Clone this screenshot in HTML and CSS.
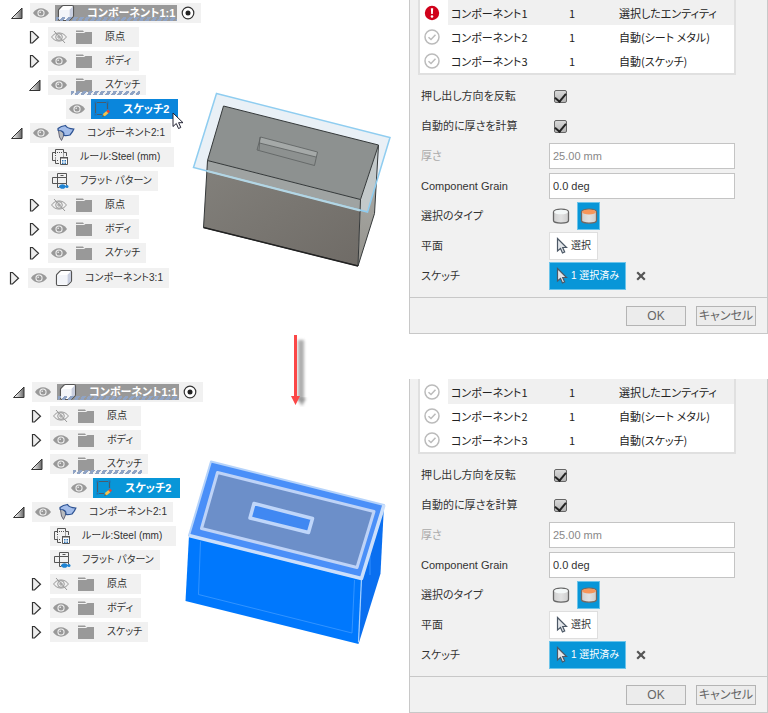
FILE: index.html
```html
<!DOCTYPE html>
<html lang="ja">
<head>
<meta charset="utf-8">
<meta name="viewport" content="width=device-width, initial-scale=1">
<title>コンポーネント</title>
<link rel="stylesheet" href="styles.css">
</head>
<body>
<svg class="defs" aria-hidden="true">
  <defs>
    <linearGradient id="caret-fill" x1="0" x2="1"><stop offset="0.2" stop-color="#eee"/><stop offset="1" stop-color="#666"/></linearGradient>
    <linearGradient id="can-fill" x1="0" x2="1"><stop offset="0" stop-color="#d0d0d0"/><stop offset="0.5" stop-color="#e2e2e2"/><stop offset="1" stop-color="#cecece"/></linearGradient>
    <linearGradient id="front-fill" x1="0" x2="1" y2="1"><stop offset="0" stop-color="#83817c"/><stop offset="1" stop-color="#6f6b66"/></linearGradient>
    <linearGradient id="side-fill" y1="0" y2="1" x2="0"><stop offset="0" stop-color="#b2b4b1"/><stop offset="1" stop-color="#94928c"/></linearGradient>
    <filter id="soft" x="-100%" width="400%"><feGaussianBlur stdDeviation="1.500"/></filter>
  </defs>
  <symbol id="open" viewBox="0 0 14 14"><path d="M2.500 12.500 13 2v10.500z" fill="url(#caret-fill)" stroke="#333"/></symbol>
  <symbol id="closed" viewBox="0 0 14 14"><path d="M3.500 1.500H5.500L11.500 7.200 5.500 13H3.500z" fill="#ededed" stroke="#333" stroke-width="1.200"/></symbol>
  <symbol id="eye" viewBox="0 0 16 16"><path d="M0 8C4 1.800 12 1.800 16 8 12 14.200 4 14.200 0 8z" fill="#999"/><circle cx="8" cy="8" r="3.600" fill="#f1f1f1"/><circle cx="8" cy="8" r="2.500" fill="#999"/><circle cx="7.200" cy="7.200" r=".8" fill="#f1f1f1"/></symbol>
  <symbol id="eye-off" viewBox="0 0 16 16"><g fill="none" stroke="#999"><path d="M.6 8C4 2.600 12 2.600 15.400 8 12 13.400 4 13.400.6 8z"/><circle cx="8" cy="8" r="3.300"/><circle cx="8" cy="8" r="1.200"/><path d="M3 2l11 12"/></g></symbol>
  <symbol id="folder" viewBox="0 0 16 16"><path d="M0 1.500h7l1 1.500H0zM0 4h8l1.500-1H16v12H0z" fill="#999"/></symbol>
  <symbol id="cube" viewBox="0 0 18 18"><path d="M1.500 6.500q0-.8.600-1.400L5 2.100q.6-.6 1.400-.6H15q1.500 0 1.500 1.500v8.500q0 .8-.6 1.400l-3 3q-.6.6-1.400.6H3q-1.500 0-1.500-1.500z" fill="#fff" stroke="#555" stroke-width="1.200"/><path d="M12.500 5.800 16 2.300v9.200q0 .6-.5 1l-3 3z" fill="#c9cfe0"/><path d="M2.500 6h9.500v9.500H3q-.8 0-.8-.8z" fill="#f3f5f9"/></symbol>
  <symbol id="sheet" viewBox="0 0 18 18"><path d="M1.200 5 5 7.500q2 1.300 1.500 4.500L4.500 16.500 2.500 13z" fill="#b9bbbe" stroke="#667"/><path d="M1 4.500Q4 2 8.500 1.500q1.500 3 8.300 3.500-.8 2.500-3.800 6-3 .7-6 .5.500-5-5.800-5z" fill="#a3bdea" stroke="#2d5292" stroke-width="1.200"/></symbol>
  <symbol id="rule" viewBox="0 0 18 18"><g fill="none" stroke="#555"><path d="M4.500 4.500H1.500v8h3M4.500 15.500v-4M4.500 6V1.500h8V4.500h3V8M4.500 15.500H8"/><path d="M4.500 7v1M4.500 9.500v1M12.500 5.500v1M12.500 7.500v1M6 4.500h1M8 4.500h1M10 4.500h1M6 12.500h1"/><path d="M9.500 9.500h7v7h-7z" fill="#fff"/></g><path d="M9 9h8v1.500H9z" fill="#555"/><path d="M11 12h1.500v1.500H11zM13.500 12H15v1.500h-1.500zM11 14.500h1.500V16H11zM13.500 14.500H15V16h-1.500z" fill="#2c75b8"/></symbol>
  <symbol id="flat" viewBox="0 0 18 18"><path d="M6.500 1.500h9v4h-9zM1.500 5.500h14v6h-14zM6.500 5.500v10h2M15.500 11.500v2M9.500 3.500h3" fill="none" stroke="#555"/><path d="M8 14.500h9" stroke="#1f83d2" stroke-width="1.500"/><ellipse cx="11.500" cy="14.500" rx="2.800" ry="2.300" fill="#1f83d2"/><circle cx="16" cy="14.500" r="1.500" fill="#1f83d2"/></symbol>
  <symbol id="sketch" viewBox="0 0 18 18"><path d="M2.500 3v10M4 2.500h9M14.500 3v6M4 14.500h5" fill="none" stroke="#4b5b6b" stroke-width="1.200"/><path d="M1.500 1.500h2v2h-2zM13.500 1.500h2v2h-2zM1.500 13.500h2v2h-2z" fill="#1f70b0"/><path d="M9.500 16.500l1-3 3-2.500 2 2-3 2.800z" fill="#f6c34c"/><path d="M13.300 11.200l1.700-1.700 2 2-1.700 1.700z" fill="#e84434"/><path d="M9.300 16.800l.6-1.800 1.300 1.200z" fill="#443"/></symbol>
  <symbol id="target" viewBox="0 0 14 14"><circle cx="7" cy="7" r="5.800" fill="#fff" stroke="#333" stroke-width="1.200"/><circle cx="7" cy="7" r="2.500" fill="#222"/></symbol>
  <symbol id="pointer" viewBox="0 0 12 18"><path d="M1 1v13.500l3.300-3 2.200 5 2.300-1-2.200-4.800H11z" fill="#fff" stroke="#223" stroke-width="1"/></symbol>
  <symbol id="pick" viewBox="0 0 12 18"><path d="M1.500 1.500V14l3-2.500 2 4.500 2.200-1-2-4.500H10.500z" fill="#e3e6ea" stroke="#4c5866" stroke-width="1.200"/></symbol>
  <symbol id="error" viewBox="0 0 16 16"><circle cx="8" cy="8" r="7.200" fill="#d0021b"/><path d="M6.800 3.200h2.400L8.800 9H7.200z" fill="#fff"/><circle cx="8" cy="11.500" r="1.300" fill="#fff"/></symbol>
  <symbol id="done" viewBox="0 0 16 16"><circle cx="8" cy="8" r="7" fill="#fff" stroke="#bbb" stroke-width="1.500"/><path d="M4.500 8.200 7 10.500l4.500-4.800" fill="none" stroke="#bbb" stroke-width="1.500"/></symbol>
  <symbol id="can" viewBox="0 0 18 18"><path d="M1.500 5C1.500 1.200 16.500 1.200 16.500 5v8.500c0 3.500-15 3.500-15 0z" fill="url(#can-fill)" stroke="#666" stroke-width="1.300"/><ellipse cx="9" cy="5" rx="6.800" ry="2.300" fill="#f4f8f8"/></symbol>
  <symbol id="can-top" viewBox="0 0 18 18"><path d="M1.500 5C1.500 1.200 16.500 1.200 16.500 5v8.500c0 3.500-15 3.500-15 0z" fill="url(#can-fill)" stroke="#75675f" stroke-width="1.300"/><ellipse cx="9" cy="5" rx="6.900" ry="2.500" fill="#f7965a"/></symbol>
  <symbol id="cross" viewBox="0 0 10 10"><path d="M1.200 1.200l7.600 7.600M8.800 1.200 1.200 8.800" stroke="#555" stroke-width="2.200"/></symbol>
</svg>

<main class="steps">
  <section class="step">
    <ul class="tree">
      <li class="node"><svg class="caret"><use href="#open"/></svg><div class="pill root"><svg class="icon"><use href="#eye"/></svg><span class="chip hatched"><svg class="icon big"><use href="#cube"/></svg><span class="name">コンポーネント1:1</span></span><svg class="target"><use href="#target"/></svg></div></li>
      <li class="node child"><svg class="caret"><use href="#closed"/></svg><div class="pill short"><svg class="icon"><use href="#eye-off"/></svg><svg class="icon kind"><use href="#folder"/></svg><span class="name">原点</span></div></li>
      <li class="node child"><svg class="caret"><use href="#closed"/></svg><div class="pill short"><svg class="icon"><use href="#eye"/></svg><svg class="icon kind"><use href="#folder"/></svg><span class="name">ボディ</span></div></li>
      <li class="node child"><svg class="caret"><use href="#open"/></svg><div class="pill"><svg class="icon"><use href="#eye"/></svg><span class="group hatched"><svg class="icon kind"><use href="#folder"/></svg><span class="name">スケッチ</span></span></div></li>
      <li class="node leaf"><div class="pill active"><svg class="icon"><use href="#eye"/></svg><span class="chip"><svg class="icon big"><use href="#sketch"/></svg><span class="name">スケッチ2</span></span><svg class="cursor"><use href="#pointer"/></svg></div></li>
      <li class="node"><svg class="caret"><use href="#open"/></svg><div class="pill"><svg class="icon"><use href="#eye"/></svg><svg class="icon kind big"><use href="#sheet"/></svg><span class="name">コンポーネント2:1</span></div></li>
      <li class="node child bare"><div class="pill wide"><svg class="icon big"><use href="#rule"/></svg><span class="name">ルール:Steel (mm)</span></div></li>
      <li class="node child bare"><div class="pill"><svg class="icon big"><use href="#flat"/></svg><span class="name">フラット パターン</span></div></li>
      <li class="node child"><svg class="caret"><use href="#closed"/></svg><div class="pill short"><svg class="icon"><use href="#eye-off"/></svg><svg class="icon kind"><use href="#folder"/></svg><span class="name">原点</span></div></li>
      <li class="node child"><svg class="caret"><use href="#closed"/></svg><div class="pill short"><svg class="icon"><use href="#eye"/></svg><svg class="icon kind"><use href="#folder"/></svg><span class="name">ボディ</span></div></li>
      <li class="node child"><svg class="caret"><use href="#closed"/></svg><div class="pill"><svg class="icon"><use href="#eye"/></svg><svg class="icon kind"><use href="#folder"/></svg><span class="name">スケッチ</span></div></li>
      <li class="node last"><svg class="caret"><use href="#closed"/></svg><div class="pill"><svg class="icon"><use href="#eye"/></svg><svg class="icon kind big"><use href="#cube"/></svg><span class="name">コンポーネント3:1</span></div></li>
    </ul>
    <svg class="model" viewBox="180 76 220 200" role="img" aria-label="モデル">
      <path d="M216.500 93.500 390 137.500 367.500 212 193.500 167.500z" fill="#e9f0f6"/>
      <path d="M207.500 160.500 360.500 199.500 358 266 203.500 227.500z" fill="url(#front-fill)"/>
      <path d="M360.500 199.500 378.500 145 374.500 213.500 358 266z" fill="url(#side-fill)"/>
      <path d="M223.500 106 378.500 145 360.500 199.500 207.500 160.500z" fill="#8d9190"/>
      <path d="M207.500 160.500 360.500 199.500 360 210.500 207 171z" fill="#9fa3a2"/>
      <path d="M360.500 199.500 378.500 145 376.500 182 367.500 212 360 210.500z" fill="#c3c9ca"/>
      <path d="M260.500 137 317.500 152 316 157 259.500 143z" fill="#a5a9a8"/>
      <path d="M260.500 137 317.500 152 314.500 165.500 257 150zM259.500 143 316 157M260 137l-1 13" fill="none" stroke="#5c6060" stroke-width=".8"/>
      <path d="M223.500 106 378.500 145 360.500 199.500 207.500 160.500zM207.500 160.500 203.500 227.500 358 266 374.500 213.500 378.500 145M360.500 199.500 358 266" fill="none" stroke="#35393a" stroke-linejoin="round"/>
      <path d="M203.500 227.500 358 266" stroke="#222" stroke-width="1.500"/>
      <path d="M216.500 93.500 390 137.500 367.500 212 193.500 167.500z" fill="none" stroke="#8fcdf0" stroke-width="1.500"/>
      <path d="M207 171 360 210.500" stroke="#b4d6e4" stroke-width="2"/>
    </svg>
    <form class="dialog">
      <table class="parts">
        <tr class="current"><td class="state"><svg class="icon"><use href="#error"/></svg></td><td class="part">コンポーネント1</td><td class="count">1</td><td class="source">選択したエンティティ</td></tr>
        <tr><td class="state"><svg class="icon"><use href="#done"/></svg></td><td class="part">コンポーネント2</td><td class="count">1</td><td class="source">自動(シート メタル)</td></tr>
        <tr><td class="state"><svg class="icon"><use href="#done"/></svg></td><td class="part">コンポーネント3</td><td class="count">1</td><td class="source">自動(スケッチ)</td></tr>
      </table>
      <div class="fields">
        <div class="field"><label for="flip-a">押し出し方向を反転</label><input class="tick" type="checkbox" id="flip-a" checked></div>
        <div class="field"><label for="auto-a">自動的に厚さを計算</label><input class="tick" type="checkbox" id="auto-a" checked></div>
        <div class="field off"><label for="thick-a">厚さ</label><input class="text" type="text" id="thick-a" value="25.00 mm" disabled></div>
        <div class="field"><label for="grain-a">Component Grain</label><input class="text" type="text" id="grain-a" value="0.0 deg"></div>
        <div class="field"><span>選択のタイプ</span><div class="kinds"><button type="button" class="kind-button" aria-label="ボディ"><svg class="icon big"><use href="#can"/></svg></button><button type="button" class="kind-button on" aria-label="面"><svg class="icon big"><use href="#can-top"/></svg></button></div></div>
        <div class="field"><label for="plane-a">平面</label><button type="button" class="pick" id="plane-a"><svg class="pick-icon"><use href="#pick"/></svg>選択</button></div>
        <div class="field"><label for="sketch-a">スケッチ</label><div class="picked"><button type="button" class="pick on" id="sketch-a"><svg class="pick-icon"><use href="#pick"/></svg>1 選択済み</button><button type="button" class="clear" aria-label="クリア"><svg class="cross"><use href="#cross"/></svg></button></div></div>
      </div>
      <div class="actions"><button type="button" class="action">OK</button><button type="button" class="action">キャンセル</button></div>
    </form>
  </section>

  <div class="between">
    <svg class="arrow" viewBox="0 0 30 80" aria-hidden="true"><path d="M14 6h6v60h-6z" fill="#999" opacity=".8" filter="url(#soft)"/><path d="M13 64h9l-4 8z" fill="#777" opacity=".7" filter="url(#soft)"/><path d="M10 1h3v61h3L11.500 71 7 62h3z" fill="#fb4747"/></svg>
  </div>

  <section class="step after">
    <ul class="tree">
      <li class="node"><svg class="caret"><use href="#open"/></svg><div class="pill root"><svg class="icon"><use href="#eye"/></svg><span class="chip hatched"><svg class="icon big"><use href="#cube"/></svg><span class="name">コンポーネント1:1</span></span><svg class="target"><use href="#target"/></svg></div></li>
      <li class="node child"><svg class="caret"><use href="#closed"/></svg><div class="pill short"><svg class="icon"><use href="#eye-off"/></svg><svg class="icon kind"><use href="#folder"/></svg><span class="name">原点</span></div></li>
      <li class="node child"><svg class="caret"><use href="#closed"/></svg><div class="pill short"><svg class="icon"><use href="#eye"/></svg><svg class="icon kind"><use href="#folder"/></svg><span class="name">ボディ</span></div></li>
      <li class="node child"><svg class="caret"><use href="#open"/></svg><div class="pill"><svg class="icon"><use href="#eye"/></svg><span class="group hatched"><svg class="icon kind"><use href="#folder"/></svg><span class="name">スケッチ</span></span></div></li>
      <li class="node leaf"><div class="pill active"><svg class="icon"><use href="#eye"/></svg><span class="chip"><svg class="icon big"><use href="#sketch"/></svg><span class="name">スケッチ2</span></span></div></li>
      <li class="node"><svg class="caret"><use href="#open"/></svg><div class="pill"><svg class="icon"><use href="#eye"/></svg><svg class="icon kind big"><use href="#sheet"/></svg><span class="name">コンポーネント2:1</span></div></li>
      <li class="node child bare"><div class="pill wide"><svg class="icon big"><use href="#rule"/></svg><span class="name">ルール:Steel (mm)</span></div></li>
      <li class="node child bare"><div class="pill"><svg class="icon big"><use href="#flat"/></svg><span class="name">フラット パターン</span></div></li>
      <li class="node child"><svg class="caret"><use href="#closed"/></svg><div class="pill short"><svg class="icon"><use href="#eye-off"/></svg><svg class="icon kind"><use href="#folder"/></svg><span class="name">原点</span></div></li>
      <li class="node child"><svg class="caret"><use href="#closed"/></svg><div class="pill short"><svg class="icon"><use href="#eye"/></svg><svg class="icon kind"><use href="#folder"/></svg><span class="name">ボディ</span></div></li>
      <li class="node child"><svg class="caret"><use href="#closed"/></svg><div class="pill"><svg class="icon"><use href="#eye"/></svg><svg class="icon kind"><use href="#folder"/></svg><span class="name">スケッチ</span></div></li>
    </ul>
    <svg class="model" viewBox="180 455 220 200" role="img" aria-label="選択されたモデル">
      <path d="M189 535.500 361.500 578.500 358.500 644 185.500 601z" fill="#0078fd"/>
      <path d="M361.500 578.500 384 505 380.500 573.500 358.500 644z" fill="#0a6ff0"/>
      <path d="M200.500 541.500 198.500 594.500 352 633 354.500 580M370 553v22" fill="none" stroke="#3f9bff" stroke-width=".8"/>
      <path d="M361.500 578.500 358.500 642" stroke="#a5d0ff" stroke-width="1.200"/>
      <path d="M211 461.500 384 505 361.500 578.500 189 535.500z" fill="#4a8ff8" stroke="#b5d3fb" stroke-width="2" stroke-linejoin="round"/>
      <path d="M189 535.500 361.500 578.500 384 505" fill="none" stroke="#cbdffb" stroke-width="3.500" stroke-linejoin="round"/>
      <path d="M217.500 472.500 374 511.500 357 567.500 201.500 528.500z" fill="#6c8fc9" stroke="#bed3f7" stroke-width="3" stroke-linejoin="round"/>
      <path d="M254 503.500 312.500 518.500 308.500 532.500 250 518z" fill="#4088f2" stroke="#bfd6fa" stroke-width="3.500" stroke-linejoin="round"/>
    </svg>
    <form class="dialog">
      <table class="parts">
        <tr class="current"><td class="state"><svg class="icon"><use href="#done"/></svg></td><td class="part">コンポーネント1</td><td class="count">1</td><td class="source">選択したエンティティ</td></tr>
        <tr><td class="state"><svg class="icon"><use href="#done"/></svg></td><td class="part">コンポーネント2</td><td class="count">1</td><td class="source">自動(シート メタル)</td></tr>
        <tr><td class="state"><svg class="icon"><use href="#done"/></svg></td><td class="part">コンポーネント3</td><td class="count">1</td><td class="source">自動(スケッチ)</td></tr>
      </table>
      <div class="fields">
        <div class="field"><label for="flip-b">押し出し方向を反転</label><input class="tick" type="checkbox" id="flip-b" checked></div>
        <div class="field"><label for="auto-b">自動的に厚さを計算</label><input class="tick" type="checkbox" id="auto-b" checked></div>
        <div class="field off"><label for="thick-b">厚さ</label><input class="text" type="text" id="thick-b" value="25.00 mm" disabled></div>
        <div class="field"><label for="grain-b">Component Grain</label><input class="text" type="text" id="grain-b" value="0.0 deg"></div>
        <div class="field"><span>選択のタイプ</span><div class="kinds"><button type="button" class="kind-button" aria-label="ボディ"><svg class="icon big"><use href="#can"/></svg></button><button type="button" class="kind-button on" aria-label="面"><svg class="icon big"><use href="#can-top"/></svg></button></div></div>
        <div class="field"><label for="plane-b">平面</label><button type="button" class="pick" id="plane-b"><svg class="pick-icon"><use href="#pick"/></svg>選択</button></div>
        <div class="field"><label for="sketch-b">スケッチ</label><div class="picked"><button type="button" class="pick on" id="sketch-b"><svg class="pick-icon"><use href="#pick"/></svg>1 選択済み</button><button type="button" class="clear" aria-label="クリア"><svg class="cross"><use href="#cross"/></svg></button></div></div>
      </div>
      <div class="actions"><button type="button" class="action">OK</button><button type="button" class="action">キャンセル</button></div>
    </form>
  </section>
</main>
</body>
</html>
```

FILE: styles.css
```css
* { box-sizing: border-box; }

body {
  margin: 0;
  background: #fff;
  color: #333;
  font: 11px/16px "Liberation Sans", "Noto Sans CJK JP", sans-serif;
  font-feature-settings: "palt";
}

button, input { font: inherit; font-feature-settings: inherit; color: inherit; }
button { padding: 0; border: 0; background: none; }
svg { display: block; flex: none; }
.defs { position: absolute; width: 0; height: 0; }

.step {
  display: grid;
  grid-template-columns: 180px 1fr 359px;
  align-items: start;
}

/* Browser tree */
.tree {
  grid-area: 1 / 1 / 2 / 3;
  margin: 0;
  padding: 1px 0 0 9px;
  list-style: none;
  font-size: 10px;
}
.after .tree { padding-left: 11px; }
.node { display: flex; align-items: center; height: 24px; }
.child { padding-left: 18px; }
.leaf { padding-left: 57px; }
.bare { padding-left: 39px; }
.last { margin: 1px 0 0 -2px; }
.caret { width: 14px; height: 14px; margin-right: 7px; }
.pill {
  position: relative;
  display: flex;
  align-items: center;
  height: 20px;
  padding: 0 6px 0 3px;
  background: #f1f1f1;
  white-space: nowrap;
}
.short { min-width: 91px; }
.wide { min-width: 126px; }
.icon { width: 16px; height: 16px; }
.big { width: 18px; height: 18px; }
.kind { margin-left: 9px; }
.name { margin-left: 13px; }
.bare .name { margin-left: 11px; }
.kind.big { margin-left: 8px; }
.kind.big + .name { margin-left: 12px; }
.chip {
  display: flex;
  align-items: center;
  height: 16px;
  margin-left: 6px;
  padding: 0 2px;
  color: #fff;
  font-size: 11px;
  font-weight: bold;
}
.chip .name { margin-left: 12px; }
.root .chip { background: #999; }
.target { width: 14px; height: 14px; margin-left: 4px; }
.active { padding-right: 0; }
.active .chip { height: 20px; padding: 0 8px 0 2px; background: #0a86dc; }
.after .active .chip { background: #0896d8; }
.group { display: flex; align-items: center; height: 20px; }
.hatched { position: relative; }
.hatched::after {
  content: "";
  position: absolute;
  left: 4px;
  right: 0;
  bottom: 0;
  height: 4px;
  background: repeating-linear-gradient(125deg, #8fa3c4 0 3px, transparent 3px 5px);
}
.root .hatched::after { left: 1px; }
.cursor { position: absolute; right: -6px; top: 12px; width: 12px; height: 20px; z-index: 1; }

.model { grid-area: 1 / 2; width: 220px; height: 200px; margin-top: 76px; }

/* Step arrow */
.between { position: relative; height: 45px; }
.arrow { position: absolute; left: 284px; top: 0; width: 30px; height: 80px; }

/* Dialog */
.dialog {
  grid-area: 1 / 3;
  border: 1px solid #c8c8c8;
  border-top: 0;
  background: #f1f1f1;
}
.parts {
  table-layout: fixed;
  width: 318px;
  margin-left: 8px;
  border: 2px solid #e0e0e0;
  border-top: 0;
  border-collapse: separate;
  border-spacing: 0;
  background: #fff;
  color: #222;
  font: 11px/24px "Noto Sans CJK JP", sans-serif;
  font-feature-settings: "palt";
  white-space: nowrap;
}
.parts td { height: 24px; padding: 0; }
.parts .current td { height: 25px; vertical-align: bottom; background: #f0f0f0; }
.parts .current .state { padding-bottom: 4px; background: #fff; }
.parts .state { width: 28px; padding-left: 4px; }
.parts .part { width: 112px; padding-left: 3px; }
.parts .count { width: 24px; text-align: center; }
.parts .source { padding-left: 35px; }

.fields { padding: 6px 32px 6px 11px; }
.field { display: grid; grid-template-columns: 128px 1fr; align-items: center; height: 30px; }
.off { color: #aaa; }
.text { width: 100%; height: 26px; padding: 0 3px; border: 1px solid #c4c4c4; background: #fff; }
.text:disabled { color: #888; }
.tick {
  appearance: none;
  display: grid;
  place-items: center;
  width: 13px;
  height: 13px;
  margin: 0 0 0 5px;
  border: 1px solid #666;
  border-radius: 2px;
  background: linear-gradient(#d8d8d8, #b4b4b4);
}
.tick:checked::after {
  content: "";
  width: 5px;
  height: 9px;
  margin-bottom: 3px;
  border: solid #222;
  border-width: 0 2px 2px 0;
  transform: rotate(40deg);
}
.kinds { display: flex; gap: 5px; }
.kind-button { display: grid; place-items: center; width: 23px; height: 28px; }
.kind-button.on { border: 1px solid #6cc4ea; background: #0896d8; }
.pick {
  display: flex;
  align-items: center;
  gap: 3px;
  justify-self: start;
  height: 28px;
  padding: 0 6px;
  border: 1px solid #dedede;
  background: #fff;
  font-size: 10px;
}
.pick.on { border-color: #6cc4ea; background: #0896d8; color: #fff; }
.pick-icon { width: 12px; height: 18px; }
.picked { display: flex; align-items: center; gap: 10px; }
.cross { width: 10px; height: 10px; }
.actions {
  display: flex;
  justify-content: flex-end;
  align-items: center;
  gap: 10px;
  height: 36px;
  padding-right: 11px;
  border-top: 1px solid #c8c8c8;
}
.action { width: 60px; height: 20px; border: 1px solid #b4b4b4; background: #ececec; color: #666; font-size: 12px; }
```
